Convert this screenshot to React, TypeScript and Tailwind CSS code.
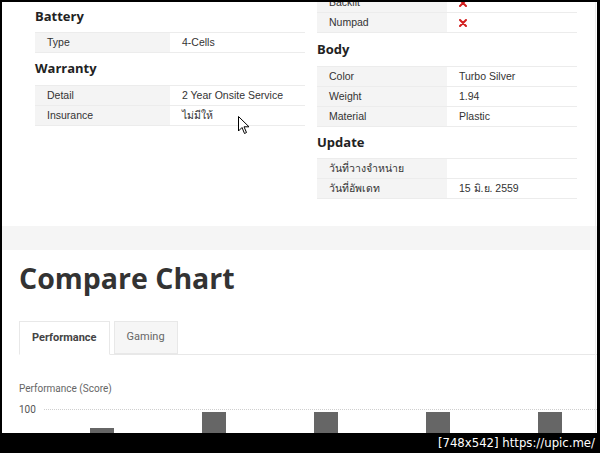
import React from "react";

type Row = { label: string; value?: React.ReactNode };

const Cross = () => (
  <svg width="8" height="8" viewBox="0 0 8 8" className="inline-block">
    <path d="M1 1 L7 7 M7 1 L1 7" stroke="#d21f1f" strokeWidth="2" strokeLinecap="round" />
  </svg>
);

const SpecTable = ({ rows }: { rows: Row[] }) => (
  <div className="border-t border-[#ececec]">
    {rows.map((r) => (
      <div key={r.label} className="grid grid-cols-2 h-5 border-b border-[#ececec] text-[10.5px] leading-[19px] text-[#333]">
        <div className="bg-[#f4f4f4] pl-3">{r.label}</div>
        <div className="pl-3 flex items-center">{r.value}</div>
      </div>
    ))}
  </div>
);

const Heading = ({ children, className = "h-8" }: { children: React.ReactNode; className?: string }) => (
  <div className={`${className} flex items-center text-[13px] font-bold text-[#222] font-['Open_Sans',sans-serif]`}>{children}</div>
);

const Cursor = () => (
  <svg width="12" height="19" viewBox="0 0 12 19" className="absolute left-[236px] top-[114px]">
    <path d="M0.5 0.5 L0.5 15 L4 11.5 L6.5 17.5 L8.5 16.5 L6 10.8 L11 10.8 Z" fill="#fff" stroke="#000" strokeWidth="1" />
  </svg>
);

export default function App() {
  return (
    <div className="w-[600px] h-[453px] bg-black flex flex-col overflow-hidden font-['Liberation_Sans','Noto_Sans',sans-serif]">
      <div className="relative mt-[2px] ml-[2px] mr-[3px] h-[431px] bg-white overflow-hidden">
        {/* spec tables */}
        <div className="grid grid-cols-[270px_260px] gap-x-3 pl-[33px]">
          <div>
            <Heading className="h-[30px]">Battery</Heading>
            <SpecTable rows={[{ label: "Type", value: "4-Cells" }]} />
            <Heading className="h-[32px]">Warranty</Heading>
            <SpecTable
              rows={[
                { label: "Detail", value: "2 Year Onsite Service" },
                { label: "Insurance", value: "ไม่มีให้" },
              ]}
            />
          </div>
          <div className="-mt-[10px]">
            <SpecTable
              rows={[
                { label: "Backlit", value: <Cross /> },
                { label: "Numpad", value: <Cross /> },
              ]}
            />
            <Heading className="h-[33px]">Body</Heading>
            <SpecTable
              rows={[
                { label: "Color", value: "Turbo Silver" },
                { label: "Weight", value: "1.94" },
                { label: "Material", value: "Plastic" },
              ]}
            />
            <Heading className="h-[31px]">Update</Heading>
            <SpecTable
              rows={[
                { label: "วันที่วางจำหน่าย" },
                { label: "วันที่อัพเดท", value: "15 มิ.ย. 2559" },
              ]}
            />
          </div>
        </div>

        {/* band */}
        <div className="mt-[27px] h-6 bg-[#f5f5f5]" />

        {/* compare chart */}
        <div className="pl-[17px]">
          <h2 className="mt-[8px] text-[28.5px] leading-[40px] font-bold text-[#333] font-['Open_Sans',sans-serif]">Compare Chart</h2>
          <div className="mt-[24px] flex items-end gap-1 border-b border-[#e8e8e8] h-[33px]">
            <div className="h-[34px] -mb-px px-3 flex items-center border border-[#e8e8e8] border-b-white bg-white text-[11px] font-bold text-[#444] font-['Roboto',sans-serif]">
              Performance
            </div>
            <div className="h-[33px] px-3 flex items-center border border-[#e8e8e8] bg-[#f6f6f6] text-[11px] text-[#666] font-['Roboto',sans-serif]">
              Gaming
            </div>
          </div>
          <div className="mt-[26px] text-[10px] text-[#666] font-['Roboto',sans-serif]">Performance (Score)</div>
          <div className="mt-[6px] flex items-center gap-2 text-[10px] text-[#555] font-['Roboto',sans-serif]">
            <span>100</span>
            <div className="flex-1 border-t border-dotted border-[#cfcfcf]" />
          </div>
          <div className="flex gap-[88px] pl-[71px] items-start -mt-[5px]">
            <div className="w-6 h-10 mt-4 bg-[#666]" />
            <div className="w-6 h-10 bg-[#666]" />
            <div className="w-6 h-10 bg-[#666]" />
            <div className="w-6 h-10 bg-[#666]" />
            <div className="w-6 h-10 bg-[#666]" />
          </div>
        </div>

        <div className="absolute right-[1px] top-0 bottom-0 w-px bg-[#ececec]" />
        <Cursor />
      </div>
      <div className="flex-1 flex items-center justify-end pr-[5px] text-white text-[13px] font-['DejaVu_Sans_Condensed','DejaVu_Sans',sans-serif]">
        [748x542] https://upic.me/
      </div>
    </div>
  );
}
